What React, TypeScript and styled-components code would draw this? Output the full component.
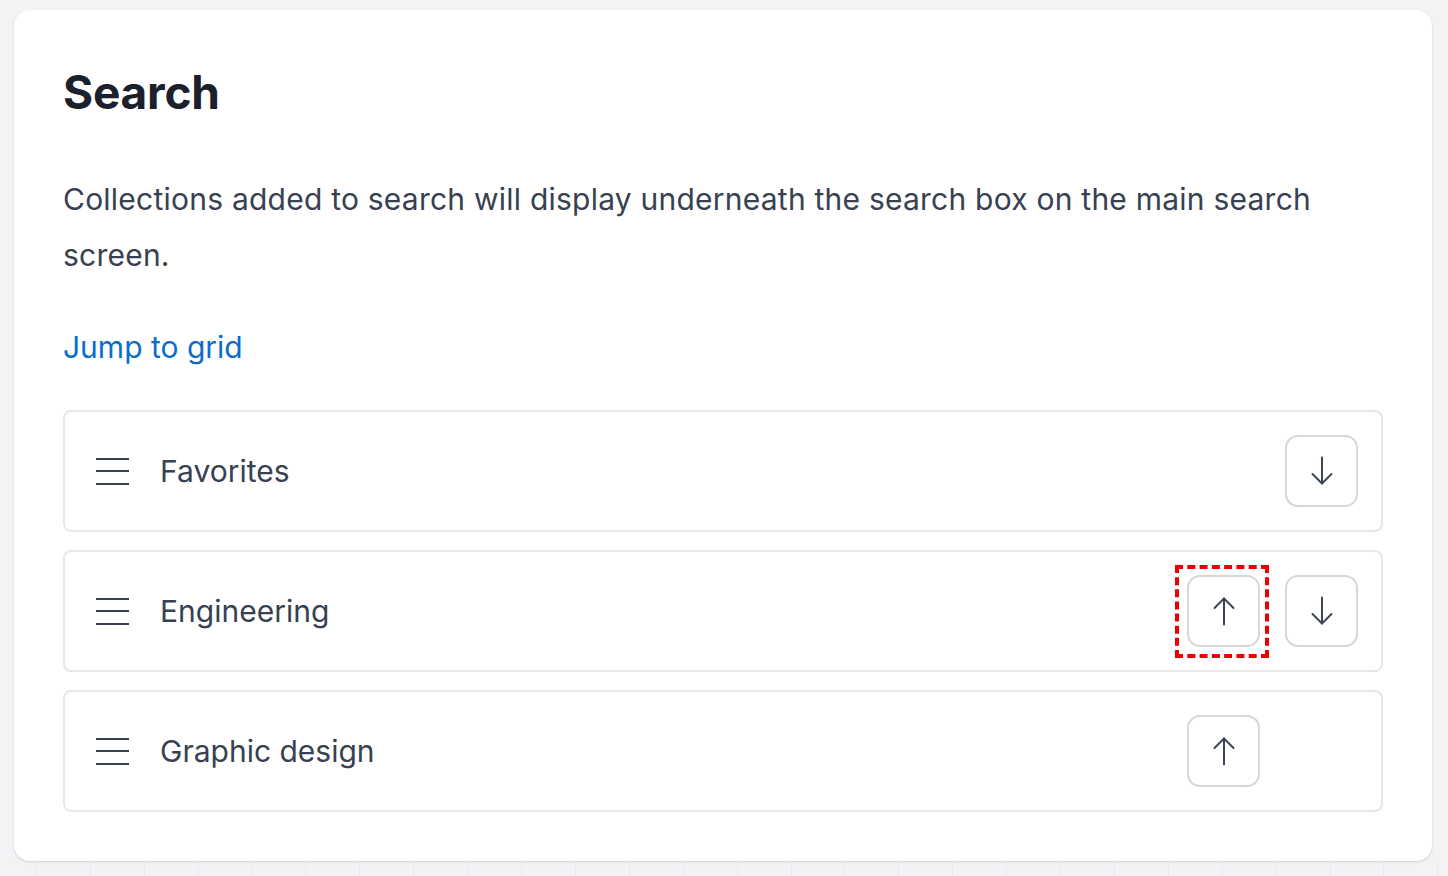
import React from "react";
import styled, { createGlobalStyle } from "styled-components";

const Global = createGlobalStyle`
  html, body { margin: 0; padding: 0; }
  body {
    background: #f2f3f5;
    font-family: Inter, "Noto Sans", "Liberation Sans", sans-serif;
    -webkit-font-smoothing: antialiased;
  }
  * { box-sizing: border-box; }
`;

const Page = styled.div`
  display: flex;
  flex-direction: column;
  padding: 10px 16px 0 14px;
  min-height: 876px;
`;

const Card = styled.section`
  background: #ffffff;
  border-radius: 16px;
  box-shadow: 0 1px 3px rgba(17, 24, 39, 0.1), 0 1px 2px rgba(17, 24, 39, 0.06);
  padding: 49px;
  display: flex;
  flex-direction: column;
`;

const GridStrip = styled.div`
  flex: 1;
  margin: 0 -16px 0 -14px;
  background-image: repeating-linear-gradient(
    to right,
    transparent 0,
    transparent 36px,
    #eaebee 36px,
    #eaebee 37px,
    transparent 37px,
    transparent 53.9px
  );
`;

const Title = styled.h1`
  margin: 0;
  font-size: 46px;
  line-height: 66px;
  font-weight: 700;
  color: #1a202c;
  letter-spacing: -0.2px;
`;

const Description = styled.p`
  margin: 46px 0 0;
  font-size: 30px;
  line-height: 56px;
  letter-spacing: 0.23px;
  color: #374151;
`;

const JumpLink = styled.a`
  display: inline-block;
  margin-top: 44px;
  font-size: 30px;
  line-height: 40px;
  color: #0a6dca;
  text-decoration: none;
  align-self: flex-start;
`;

const List = styled.ul`
  list-style: none;
  margin: 43px 0 0;
  padding: 0;
  display: flex;
  flex-direction: column;
  gap: 18px;
`;

const Row = styled.li`
  display: flex;
  align-items: center;
  border: 2px solid #e5e7eb;
  border-radius: 8px;
  padding: 23px 24px 23px 31px;
`;

const Handle = styled.span`
  display: flex;
  flex-direction: column;
  gap: 10.5px;
  width: 33px;
  flex-shrink: 0;
  & > i {
    display: block;
    height: 2px;
    background: #374151;
  }
`;

const Label = styled.span`
  flex: 1;
  margin-left: 31px;
  font-size: 30px;
  color: #374151;
`;

const Actions = styled.div`
  display: grid;
  grid-template-columns: 72px 72px;
  gap: 26px;
`;

const MoveButton = styled.button<{ $focused?: boolean; $slot: number }>`
  position: relative;
  grid-column: ${(p) => p.$slot};
  width: 73px;
  height: 72px;
  display: flex;
  align-items: center;
  justify-content: center;
  background: #ffffff;
  border: 2px solid #d4d7dc;
  border-radius: 13px;
  padding: 0;
  cursor: pointer;
  outline: none;

  &::after {
    content: "";
    display: ${(p) => (p.$focused ? "block" : "none")};
    position: absolute;
    top: -12px;
    bottom: -13px;
    left: -14px;
    right: -11px;
    border: 4px dashed #ee0000;
    pointer-events: none;
  }
`;

const Arrow = ({ dir }: { dir: "up" | "down" }) => (
  <svg
    width="30"
    height="30"
    viewBox="0 0 30 30"
    fill="none"
    stroke="#3b4556"
    strokeWidth="2"
    strokeLinecap="round"
    strokeLinejoin="round"
    style={{ transform: dir === "down" ? "rotate(180deg)" : undefined }}
  >
    <path d="M15 2.5V28.5" />
    <path d="M5.5 12L15 2.5L24.5 12" />
  </svg>
);

type Item = { name: string; up: boolean; down: boolean; focusUp?: boolean };

const items: Item[] = [
  { name: "Favorites", up: false, down: true },
  { name: "Engineering", up: true, down: true, focusUp: true },
  { name: "Graphic design", up: true, down: false },
];

export default function App() {
  return (
    <>
      <Global />
      <Page>
        <Card>
          <Title>Search</Title>
          <Description>
            Collections added to search will display underneath the search box on the main search
            screen.
          </Description>
          <JumpLink href="#grid">Jump to grid</JumpLink>
          <List>
            {items.map((it) => (
              <Row key={it.name}>
                <Handle aria-hidden>
                  <i />
                  <i />
                  <i />
                </Handle>
                <Label>{it.name}</Label>
                <Actions>
                  {it.up && (
                    <MoveButton $slot={1} $focused={it.focusUp} aria-label={`Move ${it.name} up`}>
                      <Arrow dir="up" />
                    </MoveButton>
                  )}
                  {it.down && (
                    <MoveButton $slot={2} aria-label={`Move ${it.name} down`}>
                      <Arrow dir="down" />
                    </MoveButton>
                  )}
                </Actions>
              </Row>
            ))}
          </List>
        </Card>
        <GridStrip />
      </Page>
    </>
  );
}
